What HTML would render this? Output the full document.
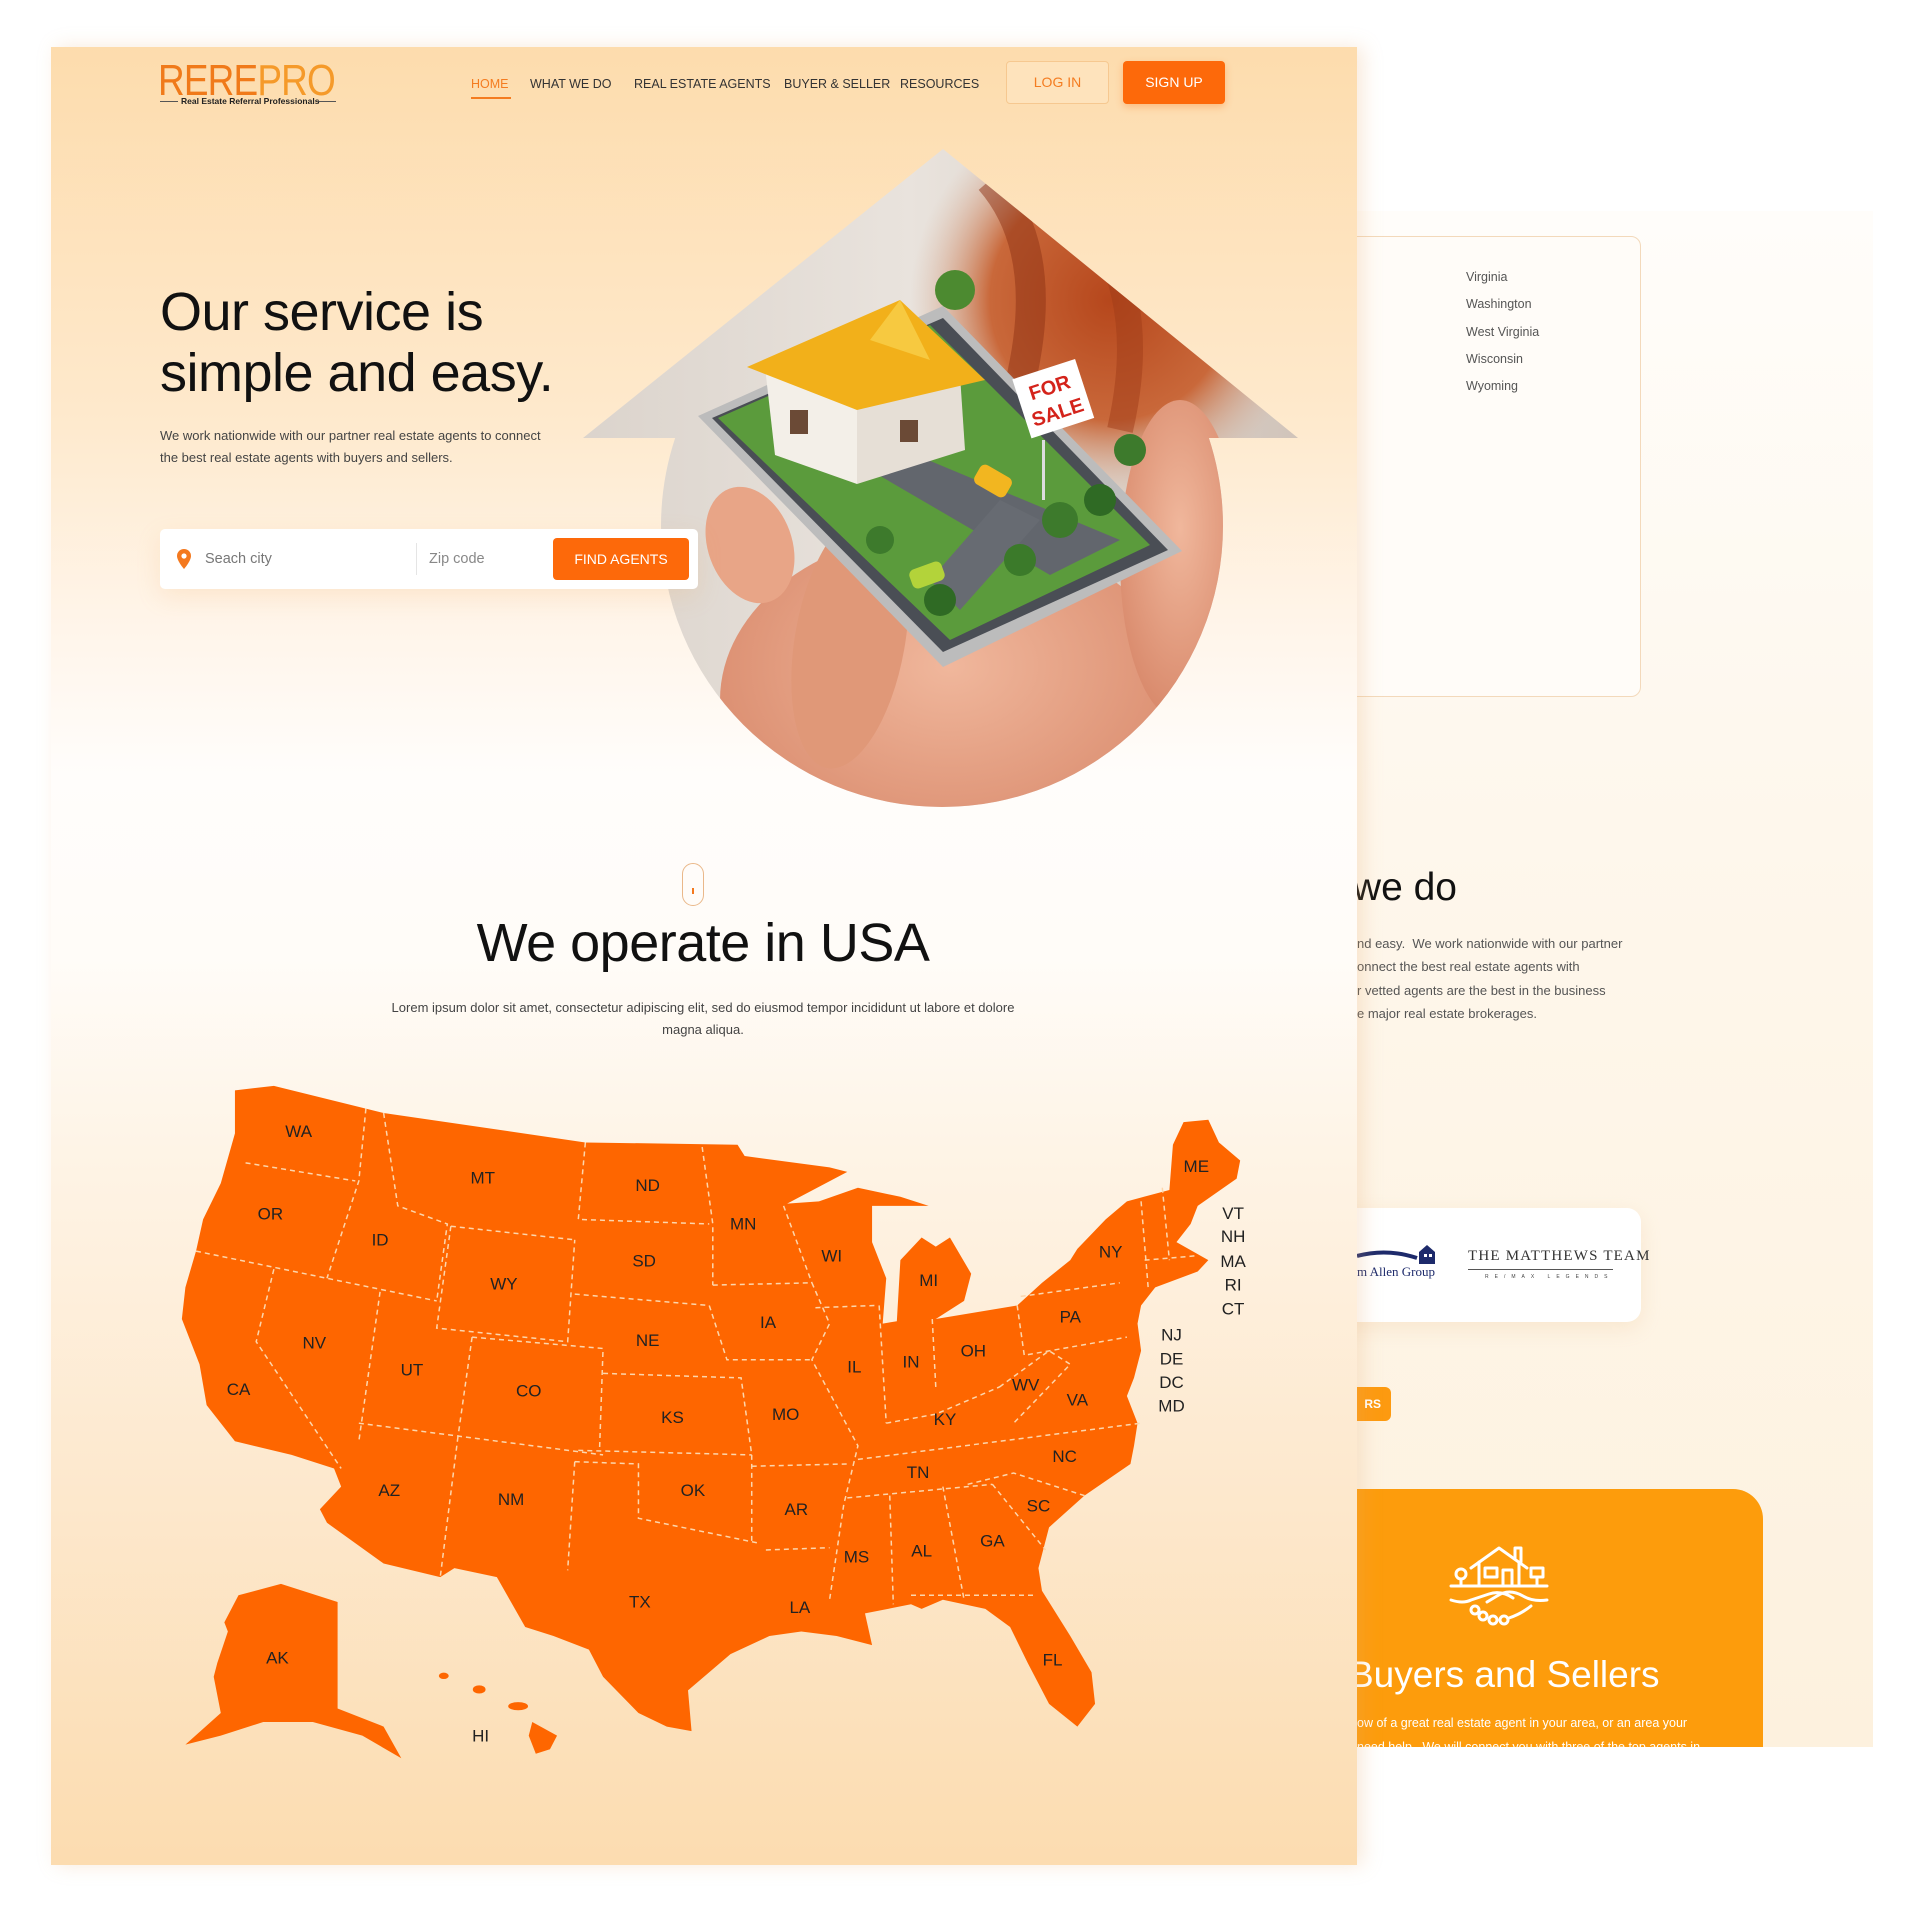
<!DOCTYPE html>
<html><head><meta charset="utf-8">
<style>
*{margin:0;padding:0;box-sizing:border-box}
body{width:1920px;height:1906px;background:#fff;position:relative;overflow:hidden;font-family:"Liberation Sans",sans-serif;color:#111}
.abs{position:absolute}
#right{left:1300px;top:211px;width:573px;height:1536px;background:linear-gradient(180deg,#fffdfa 0%,#fef7ec 40%,#fdf1de 100%)}
#main{left:51px;top:47px;width:1306px;height:1818px;background:linear-gradient(180deg,#fddcad 0%,#fee9cc 20%,#fff5ea 32%,#fffdfb 40%,#fffcf8 50%,#fef3e4 62%,#fde9cf 78%,#fcdcb0 100%);box-shadow:6px 0 18px rgba(230,170,110,.25);z-index:2}
.nav{font-size:12.5px;color:#333;top:77px;z-index:3}
.t{white-space:nowrap}
</style></head><body>

<div id="right" class="abs"></div>
<div class="abs" style="left:1300px;top:236px;width:341px;height:461px;border:1px solid #f3d9bb;border-radius:10px;background:#fffcf8"></div>
<div class="abs t" style="left:1466px;top:264px;font-size:12.5px;color:#555;line-height:27.3px">Virginia<br>Washington<br>West Virginia<br>Wisconsin<br>Wyoming</div>
<div class="abs t" style="left:1200px;top:866px;font-size:39px;font-weight:500;color:#111;width:257px;text-align:right">What we do</div>
<div class="abs t" style="left:1357px;top:932px;font-size:13px;color:#555;line-height:23.4px">nd easy.&nbsp; We work nationwide with our partner<br>onnect the best real estate agents with<br>r vetted agents are the best in the business<br>e major real estate brokerages.</div>
<div class="abs" style="left:1280px;top:1208px;width:361px;height:114px;background:#fff;border-radius:14px;box-shadow:0 6px 20px rgba(230,180,120,.2)"></div>
<svg class="abs" style="left:1357px;top:1242px" width="82" height="44"><path d="M0 14 Q30 6 60 16" stroke="#1d2a6b" stroke-width="4" fill="none"/><path d="M62 10 L70 3 L78 10 L78 22 L62 22Z" fill="#1d2a6b"/><rect x="67" y="12" width="3" height="3" fill="#fff"/><rect x="72" y="12" width="3" height="3" fill="#fff"/><text x="0" y="34" font-family="Liberation Serif" font-size="13" fill="#1d2a6b">m Allen Group</text></svg>
<div class="abs t" style="left:1468px;top:1248px;font-family:'Liberation Serif',serif;font-size:15px;letter-spacing:1.2px;color:#333">THE MATTHEWS TEAM</div>
<div class="abs" style="left:1468px;top:1269px;width:145px;height:1px;background:#555"></div>
<div class="abs t" style="left:1485px;top:1274px;font-size:5px;letter-spacing:6px;color:#444">RE/MAX LEGENDS</div>
<div class="abs" style="left:1300px;top:1387px;width:91px;height:34px;background:#fd9a10;border-radius:6px;color:#fff;font-size:12px;font-weight:bold;line-height:34px;text-align:right;padding-right:10px">RS</div>
<div class="abs" style="left:1300px;top:1489px;width:463px;height:258px;background:#fd9c0c;border-top-right-radius:30px;overflow:hidden">
 <svg class="abs" style="left:149px;top:49px" width="100" height="100" viewBox="0 0 100 100" fill="none" stroke="#fff" stroke-width="3" stroke-linejoin="round" stroke-linecap="round">
  <path d="M22 30 L50 10 L78 30 M30 24 V48 H70 V24 M66 20 V10 H72 V24"/><rect x="36" y="30" width="12" height="9"/><rect x="54" y="32" width="9" height="16"/>
  <circle cx="12" cy="36" r="5"/><path d="M12 41 V48"/><rect x="82" y="30" width="12" height="9"/><path d="M88 39 V48"/><path d="M2 48 H98"/>
  <path d="M2 62 Q14 66 22 62 L40 56 Q52 52 64 60 M98 62 Q84 64 74 58 Q60 50 48 58 L38 64"/>
  <circle cx="26" cy="72" r="4"/><circle cx="34" cy="78" r="4"/><circle cx="44" cy="82" r="4"/><circle cx="55" cy="82" r="4"/><path d="M60 80 Q72 76 82 68"/>
 </svg>
 <div class="abs t" style="left:49px;top:165px;font-size:37px;font-weight:500;color:#fff">Buyers and Sellers</div>
 <div class="abs t" style="left:57px;top:227px;font-size:12.5px;color:#fff">ow of a great real estate agent in your area, or an area your</div>
 <div class="abs t" style="left:57px;top:251px;font-size:12.5px;color:#fff">need help.&nbsp; We will connect you with three of the top agents in</div>
</div>

<div id="main" class="abs"></div>

<div class="abs t" style="left:158px;top:56px;font-size:44px;color:#f07a1a;transform:scaleX(.84);transform-origin:left top;z-index:3;letter-spacing:-1px">RERE<span style="color:#f59a2a">PRO</span></div>
<div class="abs" style="left:160px;top:101px;width:18px;height:1px;background:#555;z-index:3"></div>
<div class="abs" style="left:318px;top:101px;width:18px;height:1px;background:#555;z-index:3"></div>
<div class="abs t" style="left:181px;top:96px;font-size:8.5px;font-weight:bold;color:#222;z-index:3">Real Estate Referral Professionals</div>

<div class="abs nav t" style="left:471px;color:#f47c20">HOME</div>
<div class="abs" style="left:471px;top:97px;width:40px;height:2px;background:#f47c20;z-index:3"></div>
<div class="abs nav t" style="left:530px">WHAT WE DO</div>
<div class="abs nav t" style="left:634px">REAL ESTATE AGENTS</div>
<div class="abs nav t" style="left:784px">BUYER &amp; SELLER</div>
<div class="abs nav t" style="left:900px">RESOURCES</div>
<div class="abs" style="left:1006px;top:61px;width:103px;height:43px;border:1px solid #f6c890;border-radius:4px;background:#fee3bc;color:#f47c20;font-size:14px;line-height:41px;text-align:center;z-index:3">LOG IN</div>
<div class="abs" style="left:1123px;top:61px;width:102px;height:43px;border-radius:4px;background:#fd690a;color:#fff;font-size:14px;line-height:43px;text-align:center;z-index:3;box-shadow:0 3px 8px rgba(253,105,10,.3)">SIGN UP</div>

<div class="abs t" style="left:160px;top:282px;font-size:54px;font-weight:500;line-height:61px;color:#111;z-index:3;letter-spacing:-.5px">Our service is<br>simple and easy.</div>
<div class="abs t" style="left:160px;top:425px;font-size:13px;line-height:22px;color:#444;z-index:3">We work nationwide with our partner real estate agents to connect<br>the best real estate agents with buyers and sellers.</div>

<svg class="abs" style="left:0;top:0;z-index:3" width="1357" height="820" viewBox="0 0 1357 820">
 <defs>
  <clipPath id="hc"><polygon points="943,149 583,438 1298,438"/><circle cx="942" cy="526" r="281"/></clipPath>
  <linearGradient id="bg1" x1="0" y1="0" x2="1" y2="0"><stop offset="0" stop-color="#d8d0c8"/><stop offset=".5" stop-color="#e9e3dd"/><stop offset="1" stop-color="#cfc2b8"/></linearGradient>
  <radialGradient id="wood" cx=".5" cy=".5" r=".5"><stop offset="0" stop-color="#b6471c"/><stop offset=".6" stop-color="#c9683a"/><stop offset="1" stop-color="#d9b7a2" stop-opacity="0"/></radialGradient>
  <radialGradient id="skin" cx=".5" cy=".4" r=".6"><stop offset="0" stop-color="#f0b79c"/><stop offset="1" stop-color="#d98a6c"/></radialGradient>
 </defs>
 <g clip-path="url(#hc)">
  <rect x="500" y="140" width="820" height="680" fill="url(#bg1)"/>
  <ellipse cx="1110" cy="300" rx="200" ry="200" fill="url(#wood)"/>
  <path d="M990 180 Q1060 260 1010 420" stroke="#8e3214" stroke-width="30" fill="none" opacity=".5"/>
  <path d="M1090 220 Q1150 300 1120 430" stroke="#a03c18" stroke-width="26" fill="none" opacity=".5"/>
  <ellipse cx="950" cy="700" rx="230" ry="170" fill="url(#skin)"/>
  <ellipse cx="1180" cy="560" rx="60" ry="160" fill="url(#skin)"/>
  <ellipse cx="750" cy="545" rx="42" ry="60" fill="#e8a587" transform="rotate(-20 750 545)"/>
  <ellipse cx="850" cy="640" rx="55" ry="130" fill="#e09878" transform="rotate(10 850 640)"/>
  <polygon points="698,416 943,306 1182,551 943,667" fill="#bcbcbc"/>
  <polygon points="712,418 943,318 1168,550 943,652" fill="#4a4e55"/>
  <polygon points="718,418 930,325 1150,545 950,640" fill="#5b9b3c"/>
  <path d="M880 440 L1120 540 L1050 575 L870 470Z" fill="#62666d"/>
  <path d="M930 580 L1000 500 L1040 520 L960 610Z" fill="#676b72"/>
  <circle cx="1060" cy="520" r="18" fill="#3d7a2c"/><circle cx="1100" cy="500" r="16" fill="#2f6a24"/><circle cx="1020" cy="560" r="16" fill="#3b7a2a"/><circle cx="880" cy="540" r="14" fill="#3d7a2c"/><circle cx="940" cy="600" r="16" fill="#2f6a24"/><circle cx="1130" cy="450" r="16" fill="#3d7a2c"/><circle cx="955" cy="290" r="20" fill="#4c8a30"/>
  <polygon points="765,367 857,404 857,484 775,455" fill="#f3efe8"/>
  <polygon points="857,404 960,375 965,450 857,484" fill="#e6dfd6"/>
  <polygon points="747,367 900,300 985,380 857,410" fill="#f2b01a"/>
  <polygon points="870,340 900,300 930,360" fill="#f7c940"/>
  <rect x="790" y="410" width="18" height="24" fill="#6b4a36"/><rect x="900" y="420" width="18" height="22" fill="#6b4a36"/>
  <rect x="975" y="470" width="36" height="22" rx="6" fill="#f2b620" transform="rotate(30 993 481)"/>
  <rect x="910" y="565" width="34" height="20" rx="6" fill="#b3d33a" transform="rotate(-20 927 575)"/>
  <rect x="1042" y="440" width="3" height="60" fill="#ddd"/>
  <g transform="rotate(-18 1052 398)"><rect x="1020" y="368" width="66" height="62" fill="#fff"/><text x="1053" y="394" text-anchor="middle" font-family="Liberation Sans" font-weight="bold" font-size="20" fill="#d4231b">FOR</text><text x="1053" y="420" text-anchor="middle" font-family="Liberation Sans" font-weight="bold" font-size="20" fill="#d4231b">SALE</text></g>
 </g>
</svg>

<div class="abs" style="left:160px;top:529px;width:538px;height:60px;background:#fff;border-radius:5px;box-shadow:0 8px 24px rgba(240,170,100,.18);z-index:4">
 <svg class="abs" style="left:17px;top:20px" width="14" height="20" viewBox="0 0 14 20"><path d="M7 0 A7 7 0 0 1 14 7 C14 12 7 20 7 20 C7 20 0 12 0 7 A7 7 0 0 1 7 0Z" fill="#f4791f"/><circle cx="7" cy="7" r="2.6" fill="#fff"/></svg>
 <div class="abs t" style="left:45px;top:22px;font-size:14.5px;color:#777">Seach city</div>
 <div class="abs" style="left:256px;top:14px;width:1px;height:32px;background:#e5e5e5"></div>
 <div class="abs t" style="left:269px;top:22px;font-size:14.5px;color:#888">Zip code</div>
 <div class="abs" style="left:393px;top:9px;width:136px;height:42px;background:#fd690a;border-radius:4px;color:#fff;font-size:14px;line-height:42px;text-align:center">FIND AGENTS</div>
</div>

<div class="abs" style="left:682px;top:863px;width:22px;height:43px;border:1.5px solid #eab88a;border-radius:11px;z-index:4"></div>
<div class="abs" style="left:692px;top:888px;width:2px;height:6px;background:#f4791f;z-index:4"></div>

<div class="abs t" style="left:0;width:1406px;text-align:center;top:912px;font-size:54px;font-weight:500;color:#111;z-index:4;letter-spacing:-.5px">We operate in USA</div>
<div class="abs" style="left:0;width:1406px;text-align:center;top:997px;font-size:13px;line-height:22px;color:#444;z-index:4">Lorem ipsum dolor sit amet, consectetur adipiscing elit, sed do eiusmod tempor incididunt ut labore et dolore<br>magna aliqua.</div>

<svg class="abs" style="left:150px;top:1070px;z-index:4" width="1110" height="710" viewBox="0 0 1568 1568" preserveAspectRatio="none">
 <g fill="#fe6600">
 <polygon points="120,45 175,35 330,95 615,160 830,165 840,190 960,215 985,225 900,295 945,290 1000,260 1060,280 1100,300 1020,300 1020,380 1040,460 1035,560 1055,555 1060,420 1090,370 1110,390 1130,370 1160,450 1150,510 1110,550 1225,520 1260,470 1300,420 1310,395 1350,330 1380,290 1440,265 1445,165 1460,115 1495,110 1510,160 1540,200 1535,240 1480,300 1470,340 1450,380 1495,420 1480,445 1420,480 1400,520 1395,560 1400,620 1390,680 1380,720 1395,780 1390,830 1385,870 1320,940 1270,1010 1255,1100 1260,1150 1300,1250 1330,1330 1335,1400 1310,1450 1270,1400 1240,1310 1215,1230 1180,1190 1120,1170 1090,1190 1075,1180 1010,1200 1020,1270 970,1250 920,1240 875,1250 820,1290 760,1370 765,1460 730,1450 690,1420 640,1340 620,1280 570,1250 530,1230 490,1120 430,1100 410,1120 330,1090 250,1000 240,970 270,920 260,880 200,850 120,820 80,740 70,650 45,550 50,480 65,400 75,330 100,250 120,140"/>
 <polygon points="125,1160 185,1135 265,1175 265,1410 330,1450 355,1520 300,1470 230,1440 160,1440 100,1470 50,1490 100,1420 90,1340 95,1310 110,1240 105,1220"/>
 <circle cx="415" cy="1338" r="7"/><circle cx="465" cy="1368" r="9"/><ellipse cx="520" cy="1405" rx="14" ry="9"/><polygon points="540,1440 575,1470 565,1500 545,1510 535,1470"/>
 </g>
 <g stroke="#fcd6ac" stroke-width="1.5" stroke-dasharray="5,4" fill="none">
  <path vector-effect="non-scaling-stroke" d="M135 205 L290 245 M65 400 L250 460 L405 510 M305 85 L295 245 L250 460 M330 95 L350 300 L420 340 L405 510 M425 345 L600 375 M615 160 L605 330 L790 340 M780 170 L795 340 L795 475 M425 345 L405 570 L590 600 L600 375 M600 495 L790 520 L815 640 L935 640 M175 440 L150 600 L270 880 M325 490 L295 820 M455 590 L435 810 M295 780 L640 850 M455 590 L640 615 L635 840 M640 670 L835 680 L850 850 M605 840 L850 850 M435 810 L410 1120 M600 865 L590 1105 M600 865 L690 870 L690 990 L860 1045 M935 470 L960 560 L935 640 L1000 830 L980 960 L960 1170 M850 875 L985 870 M870 1060 L960 1055 M1030 520 L1040 780 M1105 550 L1110 700 M1225 520 L1235 630 L1380 590 M1000 860 L1400 780 M985 945 L1190 915 M1045 940 L1050 1180 M1120 920 L1150 1170 M1075 1160 L1250 1160 M1190 915 L1265 1060 M1155 915 L1220 890 L1320 940 M1230 500 L1370 470 M1400 290 L1410 480 M1200 700 L1270 620 L1300 650 L1220 780 M895 300 L935 470 M940 525 L1025 520 M795 475 L935 470 M850 850 L850 1040 M1040 780 L1110 760 L1200 700 M1430 260 L1440 420 M1405 420 L1480 410"/>
 </g>
 <g font-family="Liberation Sans" font-size="24" fill="#222" text-anchor="middle">
  <text transform="translate(210,135) scale(1,1.56)" dy="8">WA</text><text transform="translate(170,318) scale(1,1.56)" dy="8">OR</text><text transform="translate(325,375) scale(1,1.56)" dy="8">ID</text><text transform="translate(470,238) scale(1,1.56)" dy="8">MT</text><text transform="translate(703,255) scale(1,1.56)" dy="8">ND</text><text transform="translate(838,340) scale(1,1.56)" dy="8">MN</text><text transform="translate(698,422) scale(1,1.56)" dy="8">SD</text><text transform="translate(500,472) scale(1,1.56)" dy="8">WY</text><text transform="translate(232,603) scale(1,1.56)" dy="8">NV</text><text transform="translate(370,662) scale(1,1.56)" dy="8">UT</text><text transform="translate(535,708) scale(1,1.56)" dy="8">CO</text><text transform="translate(125,705) scale(1,1.56)" dy="8">CA</text><text transform="translate(703,597) scale(1,1.56)" dy="8">NE</text><text transform="translate(873,557) scale(1,1.56)" dy="8">IA</text><text transform="translate(963,410) scale(1,1.56)" dy="8">WI</text><text transform="translate(1100,465) scale(1,1.56)" dy="8">MI</text><text transform="translate(995,655) scale(1,1.56)" dy="8">IL</text><text transform="translate(1075,645) scale(1,1.56)" dy="8">IN</text><text transform="translate(1163,620) scale(1,1.56)" dy="8">OH</text><text transform="translate(1300,545) scale(1,1.56)" dy="8">PA</text><text transform="translate(1357,402) scale(1,1.56)" dy="8">NY</text><text transform="translate(1478,213) scale(1,1.56)" dy="8">ME</text><text transform="translate(1530,317) scale(1,1.56)" dy="8">VT</text><text transform="translate(1530,367) scale(1,1.56)" dy="8">NH</text><text transform="translate(1530,423) scale(1,1.56)" dy="8">MA</text><text transform="translate(1530,475) scale(1,1.56)" dy="8">RI</text><text transform="translate(1530,527) scale(1,1.56)" dy="8">CT</text><text transform="translate(1443,585) scale(1,1.56)" dy="8">NJ</text><text transform="translate(1443,638) scale(1,1.56)" dy="8">DE</text><text transform="translate(1443,690) scale(1,1.56)" dy="8">DC</text><text transform="translate(1443,742) scale(1,1.56)" dy="8">MD</text><text transform="translate(738,767) scale(1,1.56)" dy="8">KS</text><text transform="translate(898,760) scale(1,1.56)" dy="8">MO</text><text transform="translate(1123,772) scale(1,1.56)" dy="8">KY</text><text transform="translate(1237,695) scale(1,1.56)" dy="8">WV</text><text transform="translate(1310,728) scale(1,1.56)" dy="8">VA</text><text transform="translate(1292,853) scale(1,1.56)" dy="8">NC</text><text transform="translate(1085,888) scale(1,1.56)" dy="8">TN</text><text transform="translate(767,928) scale(1,1.56)" dy="8">OK</text><text transform="translate(913,970) scale(1,1.56)" dy="8">AR</text><text transform="translate(338,928) scale(1,1.56)" dy="8">AZ</text><text transform="translate(510,948) scale(1,1.56)" dy="8">NM</text><text transform="translate(1255,963) scale(1,1.56)" dy="8">SC</text><text transform="translate(1190,1040) scale(1,1.56)" dy="8">GA</text><text transform="translate(1090,1062) scale(1,1.56)" dy="8">AL</text><text transform="translate(998,1075) scale(1,1.56)" dy="8">MS</text><text transform="translate(918,1187) scale(1,1.56)" dy="8">LA</text><text transform="translate(692,1175) scale(1,1.56)" dy="8">TX</text><text transform="translate(1275,1303) scale(1,1.56)" dy="8">FL</text><text transform="translate(180,1298) scale(1,1.56)" dy="8">AK</text><text transform="translate(467,1470) scale(1,1.56)" dy="8">HI</text>
 </g>
</svg>

</body></html>
